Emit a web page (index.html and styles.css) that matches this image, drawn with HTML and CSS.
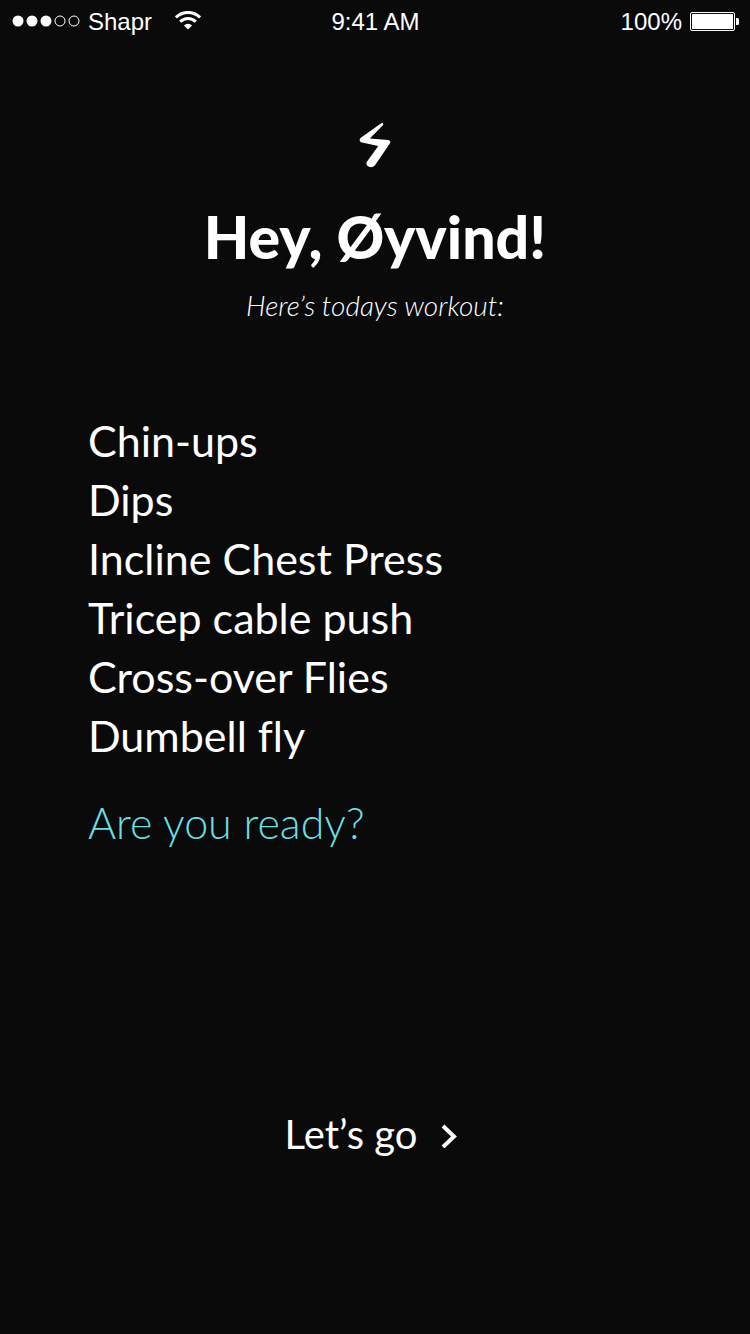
FILE: index.html
```html
<!DOCTYPE html>
<html lang="en">
<head>
<meta charset="utf-8">
<meta name="viewport" content="width=device-width, initial-scale=1">
<title>Today's workout</title>
<link rel="stylesheet" href="styles.css">
</head>
<body>
<div class="status-bar">
  <div class="status-left">
    <svg class="signal" width="68" height="14" viewBox="0 0 68 14" aria-hidden="true">
      <circle cx="6" cy="6" r="5.500" fill="#fff"/>
      <circle cx="20" cy="6" r="5.500" fill="#fff"/>
      <circle cx="34" cy="6" r="5.500" fill="#fff"/>
      <circle cx="48" cy="6" r="5" fill="none" stroke="#fff"/>
      <circle cx="62" cy="6" r="5" fill="none" stroke="#fff"/>
    </svg>
    <span class="carrier">Shapr</span>
    <svg class="wifi" width="26" height="22" viewBox="0 0 26 22" aria-hidden="true">
      <g fill="none" stroke="#fff" stroke-width="3">
        <path d="M1 6.400a17 17 0 0 1 24 0"/>
        <path d="M5.200 10.700a11 11 0 0 1 15.600 0"/>
      </g>
      <path d="M13 18.500 8.900 14.400a5.800 5.800 0 0 1 8.200 0z" fill="#fff"/>
    </svg>
  </div>
  <time class="clock">9:41 AM</time>
  <div class="status-right">
    <span>100%</span>
    <svg class="battery" width="49" height="21" viewBox="0 0 49 21" aria-hidden="true">
      <rect x=".5" y=".5" width="44" height="18" rx="1.500" fill="none" stroke="#fff"/>
      <rect x="2" y="2" width="41" height="15" rx=".5" fill="#fff"/>
      <path d="M46 6h1.500q1.500 0 1.500 1.500v4q0 1.500-1.500 1.500H46z" fill="#fff"/>
    </svg>
  </div>
</div>
<main class="screen">
  <header class="greeting">
    <svg class="bolt" width="32" height="46" viewBox="0 0 32 46" aria-hidden="true">
      <path d="M22.300 1.200 1.800 15.700C-.1 17.200.3 20 3 20.600L19.300 24 8.100 39.500C6.500 41.800 7.900 44.700 10.800 45.100 13.700 45.500 15.600 44.300 16.700 42.300L30.800 21.500C31.900 19.700 31 18.300 29 17.900L10.800 16.600 23.700 3.400C25 1.700 23.800.200 22.300 1.200Z" fill="#fff"/>
    </svg>
    <h1 class="title">Hey, Øyvind!</h1>
    <p class="subtitle">Here’s todays workout:</p>
  </header>
  <section class="workout">
    <ul class="exercises">
      <li>Chin-ups</li>
      <li>Dips</li>
      <li>Incline Chest Press</li>
      <li>Tricep cable push</li>
      <li>Cross-over Flies</li>
      <li>Dumbell fly</li>
    </ul>
    <p class="prompt">Are you ready?</p>
  </section>
  <button class="start" type="button">
    <span>Let’s go</span>
    <svg class="chevron" width="16" height="28" viewBox="0 0 16 28" aria-hidden="true">
      <path d="M2 6 13 16.500 2 27" fill="none" stroke="#fff" stroke-width="4"/>
    </svg>
  </button>
</main>
</body>
</html>
```

FILE: styles.css
```css
* {
  box-sizing: border-box;
}

body {
  margin: 0;
  min-height: 100vh;
  display: flex;
  flex-direction: column;
  background: #0a0a0a;
  color: #fff;
  font-family: Lato, "Open Sans", sans-serif;
  font-variant-ligatures: none;
}

svg {
  display: block;
  flex: none;
}

.status-bar {
  display: grid;
  grid-template-columns: 1fr auto 1fr;
  align-items: center;
  padding: 8px 11px 8px 12px;
  font-family: "Liberation Sans", Arial, sans-serif;
  font-size: 24px;
  line-height: 28px;
}

.status-left,
.status-right {
  display: flex;
  align-items: center;
}

.status-left {
  gap: 8px;
}

.status-right {
  justify-content: flex-end;
  gap: 8px;
}

.carrier {
  margin-right: 15px;
}

.screen {
  flex: 1;
  display: flex;
  flex-direction: column;
  padding: 78px 88px 176px;
}

.greeting {
  display: flex;
  flex-direction: column;
  align-items: center;
  text-align: center;
}

.title {
  margin: 34px 0 0;
  font-size: 59px;
  font-weight: 900;
  line-height: 70px;
}

.subtitle {
  margin: 17px 0 0;
  font-size: 28px;
  font-style: italic;
  font-weight: 300;
  line-height: 32px;
}

.workout {
  margin-top: 90px;
}

.exercises {
  margin: 0;
  padding: 0;
  list-style: none;
  font-size: 43px;
  line-height: 59px;
}

.prompt {
  margin: 28px 0 0;
  color: #6bdde3;
  font-size: 43px;
  font-weight: 300;
  line-height: 59px;
}

.start {
  display: flex;
  align-items: center;
  align-self: center;
  gap: 24px;
  margin-top: auto;
  padding: 0 8px 0 0;
  border: 0;
  background: none;
  color: inherit;
  font: inherit;
  font-size: 40px;
  font-variant-ligatures: none;
  line-height: 48px;
  cursor: pointer;
}
```
